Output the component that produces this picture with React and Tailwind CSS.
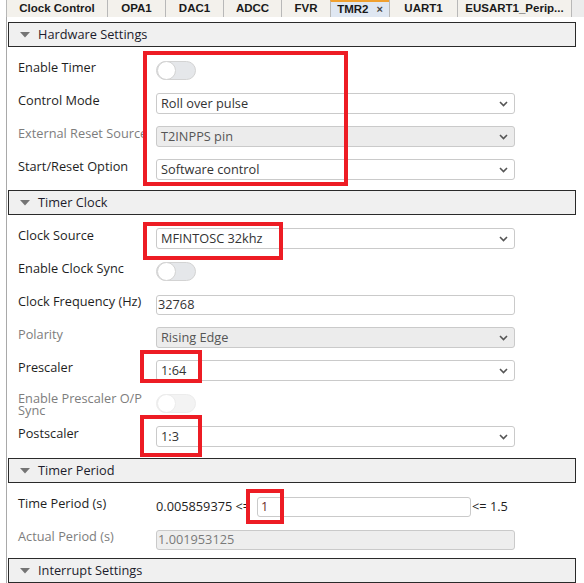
import React from "react";

const tabs = [
  { label: "Clock Control", w: 101 },
  { label: "OPA1", w: 58 },
  { label: "DAC1", w: 58 },
  { label: "ADCC", w: 58 },
  { label: "FVR", w: 49 },
  { label: "TMR2", w: 59, active: true },
  { label: "UART1", w: 68 },
  { label: "EUSART1_Perip...", w: 114 },
];

function Chevron() {
  return (
    <svg width="9" height="6" viewBox="0 0 9 6" className="shrink-0">
      <path d="M1 1 L4.5 4.5 L8 1" fill="none" stroke="#555" strokeWidth="1.6" />
    </svg>
  );
}

function Header({ title }) {
  return (
    <div className="flex h-[25px] shrink-0 items-center border border-[#2a2a2a] bg-[#f0f0f0]">
      <svg width="10" height="6" viewBox="0 0 10 6" className="ml-[11px] mr-[8px]">
        <path d="M0 0 L10 0 L5 5.5 Z" fill="#747474" />
      </svg>
      <span className="text-[12.75px] text-[#1c1c2c]">{title}</span>
    </div>
  );
}

function Row({ label, disabled, children, twoLine }) {
  return (
    <div className="flex h-[33px] items-center">
      <div
        className={`w-[138px] shrink-0 ${twoLine ? "leading-[12px]" : "pb-[5px]"} text-[12.75px] ${
          disabled ? "text-[#7d7d7d]" : "text-[#1e1e1e]"
        }`}
      >
        {label}
      </div>
      {children}
    </div>
  );
}

function Select({ value, disabled }) {
  return (
    <div
      className={`flex h-[21px] w-[359px] items-center justify-between rounded-[3px] border border-[#cacaca] pl-[4px] pr-[6px] text-[12.75px] ${
        disabled ? "bg-[#ececec] text-[#555]" : "bg-white text-[#333]"
      }`}
    >
      <span>{value}</span>
      <Chevron />
    </div>
  );
}

function Input({ value, disabled, w = "w-[359px]" }) {
  return (
    <div
      className={`flex h-[20px] ${w} items-center rounded-[3px] border border-[#cacaca] pl-[1px] text-[12.75px] ${
        disabled ? "bg-[#eeeeee] text-[#7a7a7a]" : "bg-white text-[#333]"
      }`}
    >
      {value}
    </div>
  );
}

function Toggle({ disabled }) {
  return (
    <div
      className={`relative h-[19px] w-[40px] rounded-full border ${
        disabled ? "border-[#ececec] bg-[#f3f3f3]" : "border-[#d3d3d3] bg-[#e5e7ea]"
      }`}
    >
      <div
        className={`absolute left-0 top-[-1px] h-[19px] w-[19px] rounded-full border bg-white ${
          disabled ? "border-[#ececec]" : "border-[#d3d3d3]"
        }`}
      />
    </div>
  );
}

export default function App() {
  return (
    <div
      className="relative flex h-[583px] w-[584px] flex-col overflow-hidden bg-white"
      style={{ fontFamily: '"Open Sans", "Noto Sans", sans-serif' }}
    >
      {/* tab bar */}
      <div className="flex h-[17px] shrink-0 pl-[6px]">
        {tabs.map((t) => (
          <div
            key={t.label}
            style={{ width: t.w, fontFamily: '"Liberation Sans", Arial, sans-serif' }}
            className={`flex h-[17px] shrink-0 items-center justify-center border-l border-[#b8b8b8] text-[11.5px] font-bold text-[#1a1a1a] ${
              t.active ? "border-t-2 border-t-[#f0a030] bg-[#dfe7f2]" : "bg-[#f3f1ec]"
            }`}
          >
            {t.label}
            {t.active && <span className="ml-[8px] text-[11px] text-[#444]">×</span>}
          </div>
        ))}
        <div className="h-[17px] flex-1 border-l border-[#b8b8b8] bg-[#ececec]" />
      </div>

      {/* content */}
      <div className="ml-[6px] flex flex-1 flex-col border-l border-[#a9a9a9] pl-[1px] pt-[5px]">
        <div className="mr-[8px] flex flex-col">
          <Header title="Hardware Settings" />
          <div className="flex flex-col pb-[4px] pl-[10px] pt-[7px]">
            <Row label="Enable Timer">
              <Toggle />
            </Row>
            <Row label="Control Mode">
              <Select value="Roll over pulse" />
            </Row>
            <Row label="External Reset Source" disabled>
              <Select value="T2INPPS pin" disabled />
            </Row>
            <Row label="Start/Reset Option">
              <Select value="Software control" />
            </Row>
          </div>

          <Header title="Timer Clock" />
          <div className="flex flex-col pb-[5px] pl-[10px] pt-[7px]">
            <Row label="Clock Source">
              <Select value="MFINTOSC 32khz" />
            </Row>
            <Row label="Enable Clock Sync">
              <Toggle />
            </Row>
            <Row label="Clock Frequency (Hz)">
              <Input value="32768" />
            </Row>
            <Row label="Polarity" disabled>
              <Select value="Rising Edge" disabled />
            </Row>
            <Row label="Prescaler">
              <Select value="1:64" />
            </Row>
            <Row label={<>Enable Prescaler O/P<br />Sync</>} disabled twoLine>
              <Toggle disabled />
            </Row>
            <Row label="Postscaler">
              <Select value="1:3" />
            </Row>
          </div>

          <Header title="Timer Period" />
          <div className="flex flex-col pb-[2px] pl-[10px] pt-[7px]">
            <Row label="Time Period (s)">
              <span className="w-[101px] shrink-0 whitespace-nowrap text-[12.75px] text-[#1e1e1e]">0.005859375 &lt;=</span>
              <div className="flex h-[20px] w-[214px] items-center rounded-[3px] border border-[#cacaca] bg-white pl-[3px] text-[12.75px] text-[#6a2a2a]">
                1
              </div>
              <span className="ml-[1px] text-[12.75px] text-[#1e1e1e]">&lt;= 1.5</span>
            </Row>
            <Row label="Actual Period (s)" disabled>
              <Input value="1.001953125" disabled />
            </Row>
          </div>

          <Header title="Interrupt Settings" />
        </div>
      </div>

      {/* red annotation boxes */}
      <div className="pointer-events-none absolute left-[143px] top-[51px] h-[135px] w-[205px] border-4 border-[#ed1c24]" />
      <div className="pointer-events-none absolute left-[143px] top-[222px] h-[38px] w-[140px] border-4 border-[#ed1c24]" />
      <div className="pointer-events-none absolute left-[140px] top-[350px] h-[33px] w-[62px] border-4 border-[#ed1c24]" />
      <div className="pointer-events-none absolute left-[140px] top-[415px] h-[42px] w-[62px] border-4 border-[#ed1c24]" />
      <div className="pointer-events-none absolute left-[246px] top-[489px] h-[35px] w-[38px] border-4 border-[#ed1c24]" />
    </div>
  );
}
